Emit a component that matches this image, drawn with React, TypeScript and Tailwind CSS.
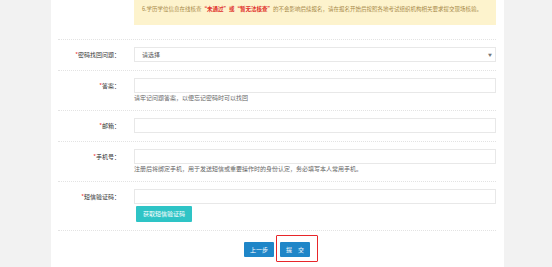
import React from "react";

const font = { fontFamily: '"Noto Sans CJK SC", "Noto Sans", sans-serif' };

function Label({ text }: { text: string }) {
  return (
    <div className="w-[62px] shrink-0 text-right text-[6px] leading-[15px] text-[#333]">
      <span className="text-[#e33]">*</span>
      {text}：
    </div>
  );
}

function Row({
  label,
  children,
  help,
  extra,
}: {
  label: string;
  children: React.ReactNode;
  help?: string;
  extra?: React.ReactNode;
}) {
  return (
    <div className="flex gap-[14px] border-b border-dotted border-[#e3e3e3] pt-[7px] pb-[8px]">
      <Label text={label} />
      <div className="flex flex-1 flex-col items-start">
        {children}
        {help && (
          <div className="mt-[1px] text-[6px] leading-[8px] text-[#666]">{help}</div>
        )}
        {extra}
      </div>
    </div>
  );
}

function Input() {
  return <div className="h-[15px] w-full border border-[#e8e8e8] bg-white" />;
}

export default function App() {
  return (
    <div className="min-h-[267px] w-[552px] bg-[#f2f2f2]" style={font}>
      <div className="ml-[51px] min-h-[267px] w-[453px] bg-white pl-[7px] pr-[8px]">
        <div className="flex gap-[14px] border-b border-dotted border-[#e3e3e3] pb-[14px]">
          <div className="w-[62px] shrink-0" />
          <div className="h-[25px] flex-1 bg-[#fdf3cd] px-[8px] pt-[5px] text-[5.5px] leading-[8px] text-[#a88a4a] whitespace-nowrap">
            6.学历学位信息在线核查
            <span className="font-bold text-[#e0312b]">“未通过”或“暂无法核查”</span>
            的不会影响后续报名，请在报名开始后按照各地考试组织机构相关要求提交现场核验。
          </div>
        </div>

        <Row label="密码找回问题">
          <div className="flex h-[15px] w-full items-center justify-between border border-[#e8e8e8] bg-white pl-[7px] pr-[3px]">
            <span className="text-[6px] leading-none text-[#555]">请选择</span>
            <span className="text-[4px] leading-none text-[#777]">▼</span>
          </div>
        </Row>

        <Row label="答案" help="请牢记问题答案，以便忘记密码时可以找回">
          <Input />
        </Row>

        <Row label="邮箱">
          <Input />
        </Row>

        <Row label="手机号" help="注册后将绑定手机，用于发送短信或重要操作时的身份认定，务必填写本人常用手机。">
          <Input />
        </Row>

        <Row
          label="短信验证码"
          extra={
            <button className="ml-[2px] mt-[2px] flex h-[16px] w-[56px] items-center justify-center rounded-[1px] bg-[#2ec4c6] text-[6px] leading-none text-white">
              获取短信验证码
            </button>
          }
        >
          <Input />
        </Row>

        <div className="flex items-start justify-center gap-[6px] pt-[11px]">
          <button className="flex h-[15px] w-[30px] items-center justify-center rounded-[1px] bg-[#1f86c8] text-[6px] leading-none text-white">
            上一步
          </button>
          <div className="relative flex">
            <button className="flex h-[15px] w-[30px] items-center justify-center rounded-[1px] bg-[#1f86c8] text-[6px] leading-none text-white">
              提　交
            </button>
            <div className="absolute -left-[4px] -top-[7px] h-[27px] w-[42px] rounded-[1px] border-[1.5px] border-[#e8262a]" />
          </div>
        </div>
      </div>
    </div>
  );
}
